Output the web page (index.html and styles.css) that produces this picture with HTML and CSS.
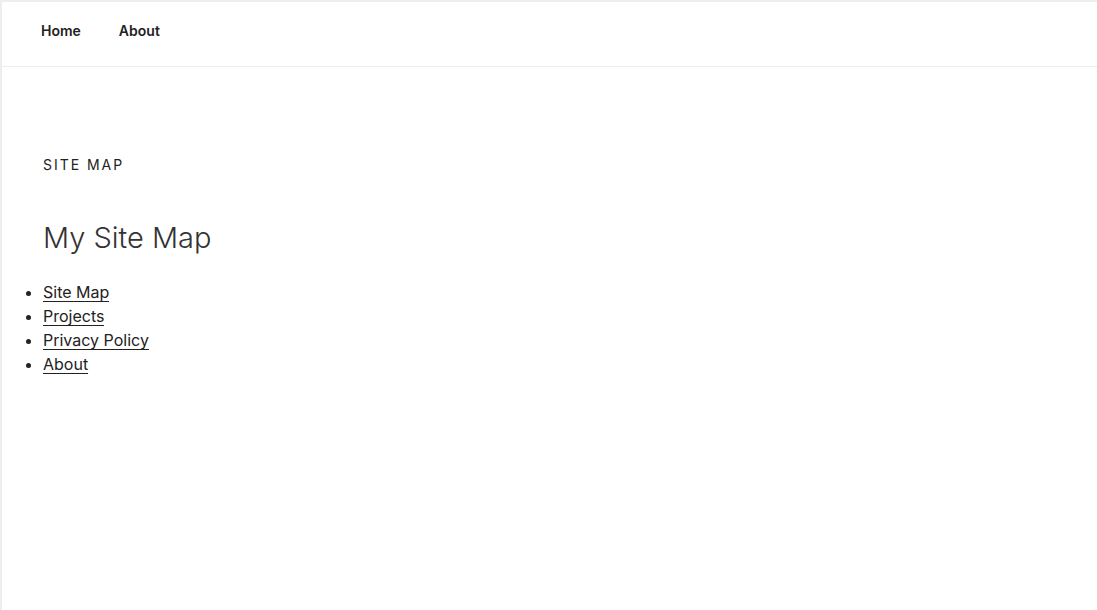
FILE: index.html
```html
<!DOCTYPE html>
<html lang="en">

<head>
    <meta charset="UTF-8">
    <meta name="viewport" content="width=device-width, initial-scale=1.0">
    <title>Site Map</title>
    <link rel="stylesheet" href="styles.css">
</head>

<body>
    <div class="page">
        <!-- Top navigation -->
        <nav class="top-nav">
            <a href="#">Home</a>
            <a href="#">About</a>
        </nav>

        <div class="content">
            <h2 class="page-label">Site Map</h2>
            <h1 class="page-title">My Site Map</h1>
        </div>

        <ul class="site-map">
            <li><a href="#">Site Map</a></li>
            <li><a href="#">Projects</a></li>
            <li><a href="#">Privacy Policy</a></li>
            <li><a href="#">About</a></li>
        </ul>
    </div>
</body>

</html>
```

FILE: styles.css
```css
html,
body {
    height: 100%;
}

body {
    margin: 0;
    font-family: "Inter", "Liberation Sans", sans-serif;
    color: #222;
    background-color: #eee;
    padding: 2px 0 0 2px;
    box-sizing: border-box;
}

.page {
    background-color: #fff;
    min-height: 100%;
}

.top-nav {
    display: flex;
    gap: 38px;
    height: 56px;
    align-items: center;
    padding: 0 0 8px 39px;
    border-bottom: 1px solid #eee;
}

.top-nav a {
    color: #222;
    font-size: 14px;
    font-weight: 600;
    text-decoration: none;
}

.content {
    padding: 89px 41px 0;
}

.page-label {
    margin: 0;
    font-size: 14px;
    font-weight: 400;
    text-transform: uppercase;
    letter-spacing: 0.14em;
    color: #222;
}

.page-title {
    margin: 47px 0 0;
    font-size: 29px;
    font-weight: 300;
    color: #333;
}

.site-map {
    margin: 25px 0 0;
    padding-left: 41px;
    font-size: 16px;
    line-height: 24px;
}

.site-map a {
    color: #222;
    text-decoration: none;
    box-shadow: inset 0 -1px 0 #222;
}
```
